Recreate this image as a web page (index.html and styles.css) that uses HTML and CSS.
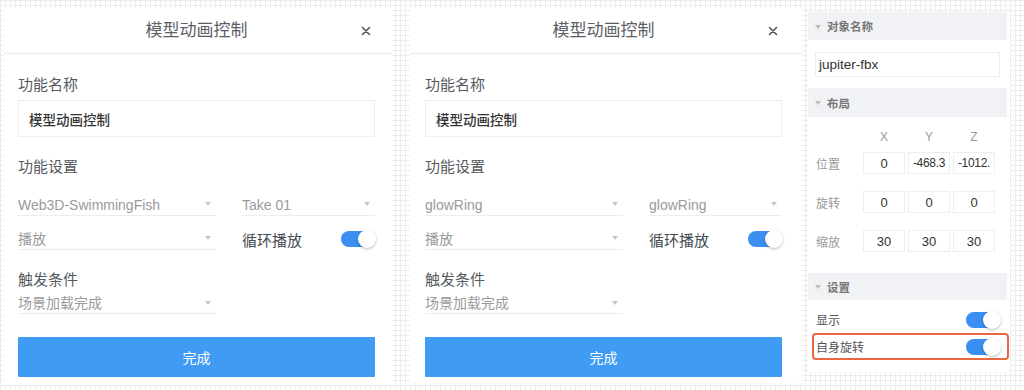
FILE: index.html
```html
<!DOCTYPE html>
<html lang="zh-CN">
  <head>
    <meta charset="UTF-8" />
    <title>模型动画控制</title>
    <link rel="stylesheet" href="styles.css">
  </head>
  <body>
    <div class="board">
      <section class="dialog">
        <header class="dialog-head">
          <span></span>
          <h2 class="dialog-title">模型动画控制</h2>
          <svg class="dialog-close" width="10" height="10" viewBox="0 0 10 10">
            <path d="M1.5 1.5 L8.5 8.5 M8.5 1.5 L1.5 8.5" stroke="#555" stroke-width="1.6" stroke-linecap="round" />
          </svg>
        </header>
        <div class="dialog-body">
          <div class="field-label">功能名称</div>
          <div class="text-input">模型动画控制</div>
          <div class="field-label label-settings">功能设置</div>
          <div class="select-grid">
            <div class="select"><span>Web3D-SwimmingFish</span><i class="caret"></i></div>
            <div class="select"><span>Take 01</span><i class="caret"></i></div>
            <div class="select"><span>播放</span><i class="caret"></i></div>
            <div class="loop"><span>循环播放</span><span class="switch"></span></div>
          </div>
          <div class="field-label label-trigger">触发条件</div>
          <div class="trigger-grid">
            <div class="select select-short"><span>场景加载完成</span><i class="caret"></i></div>
          </div>
          <button class="done-btn">完成</button>
        </div>
      </section>

      <section class="dialog dialog-wide">
        <header class="dialog-head">
          <span></span>
          <h2 class="dialog-title">模型动画控制</h2>
          <svg class="dialog-close" width="10" height="10" viewBox="0 0 10 10">
            <path d="M1.5 1.5 L8.5 8.5 M8.5 1.5 L1.5 8.5" stroke="#555" stroke-width="1.6" stroke-linecap="round" />
          </svg>
        </header>
        <div class="dialog-body">
          <div class="field-label">功能名称</div>
          <div class="text-input">模型动画控制</div>
          <div class="field-label label-settings">功能设置</div>
          <div class="select-grid">
            <div class="select"><span>glowRing</span><i class="caret"></i></div>
            <div class="select"><span>glowRing</span><i class="caret"></i></div>
            <div class="select"><span>播放</span><i class="caret"></i></div>
            <div class="loop"><span>循环播放</span><span class="switch"></span></div>
          </div>
          <div class="field-label label-trigger">触发条件</div>
          <div class="trigger-grid">
            <div class="select select-short"><span>场景加载完成</span><i class="caret"></i></div>
          </div>
          <button class="done-btn">完成</button>
        </div>
      </section>

      <aside class="inspector">
        <div class="section-head"><i class="caret"></i>对象名称</div>
        <div class="name-input">jupiter-fbx</div>

        <div class="section-head section-layout"><i class="caret"></i>布局</div>
        <div class="coords-head">
          <span></span><span>X</span><span>Y</span><span>Z</span>
        </div>
        <div class="coords">
          <span class="coord-label">位置</span>
          <span class="cell">0</span>
          <span class="cell cell-long">-468.3</span>
          <span class="cell cell-long">-1012.</span>
          <span class="coord-label">旋转</span>
          <span class="cell">0</span>
          <span class="cell">0</span>
          <span class="cell">0</span>
          <span class="coord-label">缩放</span>
          <span class="cell">30</span>
          <span class="cell">30</span>
          <span class="cell">30</span>
        </div>

        <div class="section-head section-settings"><i class="caret"></i>设置</div>
        <div class="switch-row switch-row-first"><span>显示</span><span class="switch"></span></div>
        <div class="switch-row switch-row-active"><span>自身旋转</span><span class="switch"></span></div>
      </aside>
    </div>
  </body>
</html>
```

FILE: styles.css
```css
* {
  box-sizing: border-box;
}

body {
  margin: 0;
  font-family: "Liberation Sans", "Noto Sans CJK SC", sans-serif;
  background-color: #fff;
  background-image: linear-gradient(#ededed 1px, transparent 1px),
    linear-gradient(90deg, #ededed 1px, transparent 1px);
  background-size: 5px 5px;
}

.board {
  display: flex;
  align-items: flex-start;
  padding: 8px 0 0 4px;
  height: 390px;
}

/* dialogs */
.dialog {
  width: 388px;
  height: 377px;
  background: #fff;
  --pad-l: 14px;
  --pad-r: 17px;
}

.dialog-wide {
  width: 392px;
  height: 375px;
  margin-left: 18px;
  --pad-l: 15px;
  --pad-r: 20px;
}

.dialog-head {
  height: 46px;
  border-bottom: 1px solid #ececec;
  display: grid;
  grid-template-columns: 1fr auto 1fr;
  align-items: center;
  padding: 0 var(--pad-r) 0 var(--pad-l);
}

.dialog-title {
  margin: 0;
  font-size: 17px;
  font-weight: normal;
  line-height: 24px;
  color: #5c6066;
}

.dialog-close {
  justify-self: end;
  margin-right: 4px;
}

.dialog-body {
  padding: 21px var(--pad-r) 0 var(--pad-l);
}

.field-label {
  font-size: 15px;
  line-height: 20px;
  color: #555a61;
}

.text-input {
  margin-top: 5px;
  height: 37px;
  border: 1px solid #eeeeee;
  padding: 0 10px;
  display: flex;
  align-items: center;
  font-size: 13.5px;
  font-weight: 500;
  color: #333;
}

.label-settings {
  margin-top: 20px;
}

.select-grid {
  margin-top: 13px;
  display: grid;
  grid-template-columns: 198px 1fr;
  column-gap: 26px;
  row-gap: 8px;
}

.select {
  height: 26px;
  padding-bottom: 1px;
  border-bottom: 1px solid #ececec;
  display: flex;
  align-items: flex-end;
  justify-content: space-between;
  font-size: 14px;
  line-height: 18px;
  color: #9a9a9a;
}

.select-short {
  height: 24px;
}

.caret {
  width: 0;
  height: 0;
  border-left: 3px solid transparent;
  border-right: 3px solid transparent;
  border-top: 4px solid #c4c6ca;
  align-self: center;
  margin: 4px 5px 0 0;
}

.loop {
  display: flex;
  align-items: center;
  justify-content: space-between;
  padding-top: 4px;
  font-size: 15px;
  color: #444a52;
}

.switch {
  width: 34px;
  height: 16px;
  border-radius: 8px;
  background: #3a8ff0;
  display: flex;
  align-items: center;
  justify-content: flex-end;
}

.switch::after {
  content: "";
  width: 18px;
  height: 18px;
  margin-right: -1px;
  border-radius: 50%;
  background: #fff;
  box-shadow: 0 1px 3px rgba(0, 0, 0, 0.28);
}

.label-trigger {
  margin-top: 20px;
}

.trigger-grid {
  display: grid;
  grid-template-columns: 198px;
}

.done-btn {
  display: block;
  width: 100%;
  height: 40px;
  margin-top: 23px;
  border: none;
  border-radius: 1px;
  background: #3f9bf4;
  color: #fff;
  font-family: inherit;
  font-size: 14px;
}

/* inspector panel */
.inspector {
  width: 202px;
  height: 360px;
  margin: 4px 0 0 6px;
  background: #fff;
}

.section-head {
  height: 28px;
  margin-right: 3px;
  background: #f1f2f5;
  display: flex;
  align-items: center;
  padding-left: 7px;
  font-size: 11.5px;
  font-weight: bold;
  color: #777;
}

.section-head .caret {
  margin: 1px 6px 0 0;
  border-top-color: #bbb;
}

.name-input {
  margin: 12px 10px 0 7px;
  height: 25px;
  border: 1px solid #eeeeee;
  padding-left: 3px;
  display: flex;
  align-items: center;
  font-size: 13.5px;
  color: #333;
}

.section-layout {
  margin-top: 11px;
  height: 29px;
}

.coords-head,
.coords {
  display: grid;
  grid-template-columns: 44px repeat(3, 42px);
  column-gap: 3px;
  padding-left: 8px;
}

.coords-head {
  margin-top: 12px;
  height: 16px;
  align-items: center;
  font-size: 12px;
  color: #999;
  text-align: center;
}

.coords {
  margin-top: 7px;
  row-gap: 17px;
  align-items: center;
}

.coord-label {
  font-size: 12px;
  color: #999;
}

.cell {
  height: 22px;
  border: 1px solid #eeeeee;
  display: flex;
  align-items: center;
  justify-content: center;
  font-size: 13px;
  color: #333;
  white-space: nowrap;
}

.cell-long {
  font-size: 12px;
  letter-spacing: -0.3px;
}

.section-settings {
  margin-top: 21px;
  height: 27px;
}

.switch-row {
  height: 27px;
  margin: 0 1px 0 4px;
  border: 2px solid transparent;
  border-radius: 4px;
  padding: 0 7px 0 2px;
  display: flex;
  align-items: center;
  justify-content: space-between;
  font-size: 12px;
  color: #555;
}

.switch-row-first {
  margin-top: 6px;
}

.switch-row-active {
  border-color: #e8693f;
}
```
